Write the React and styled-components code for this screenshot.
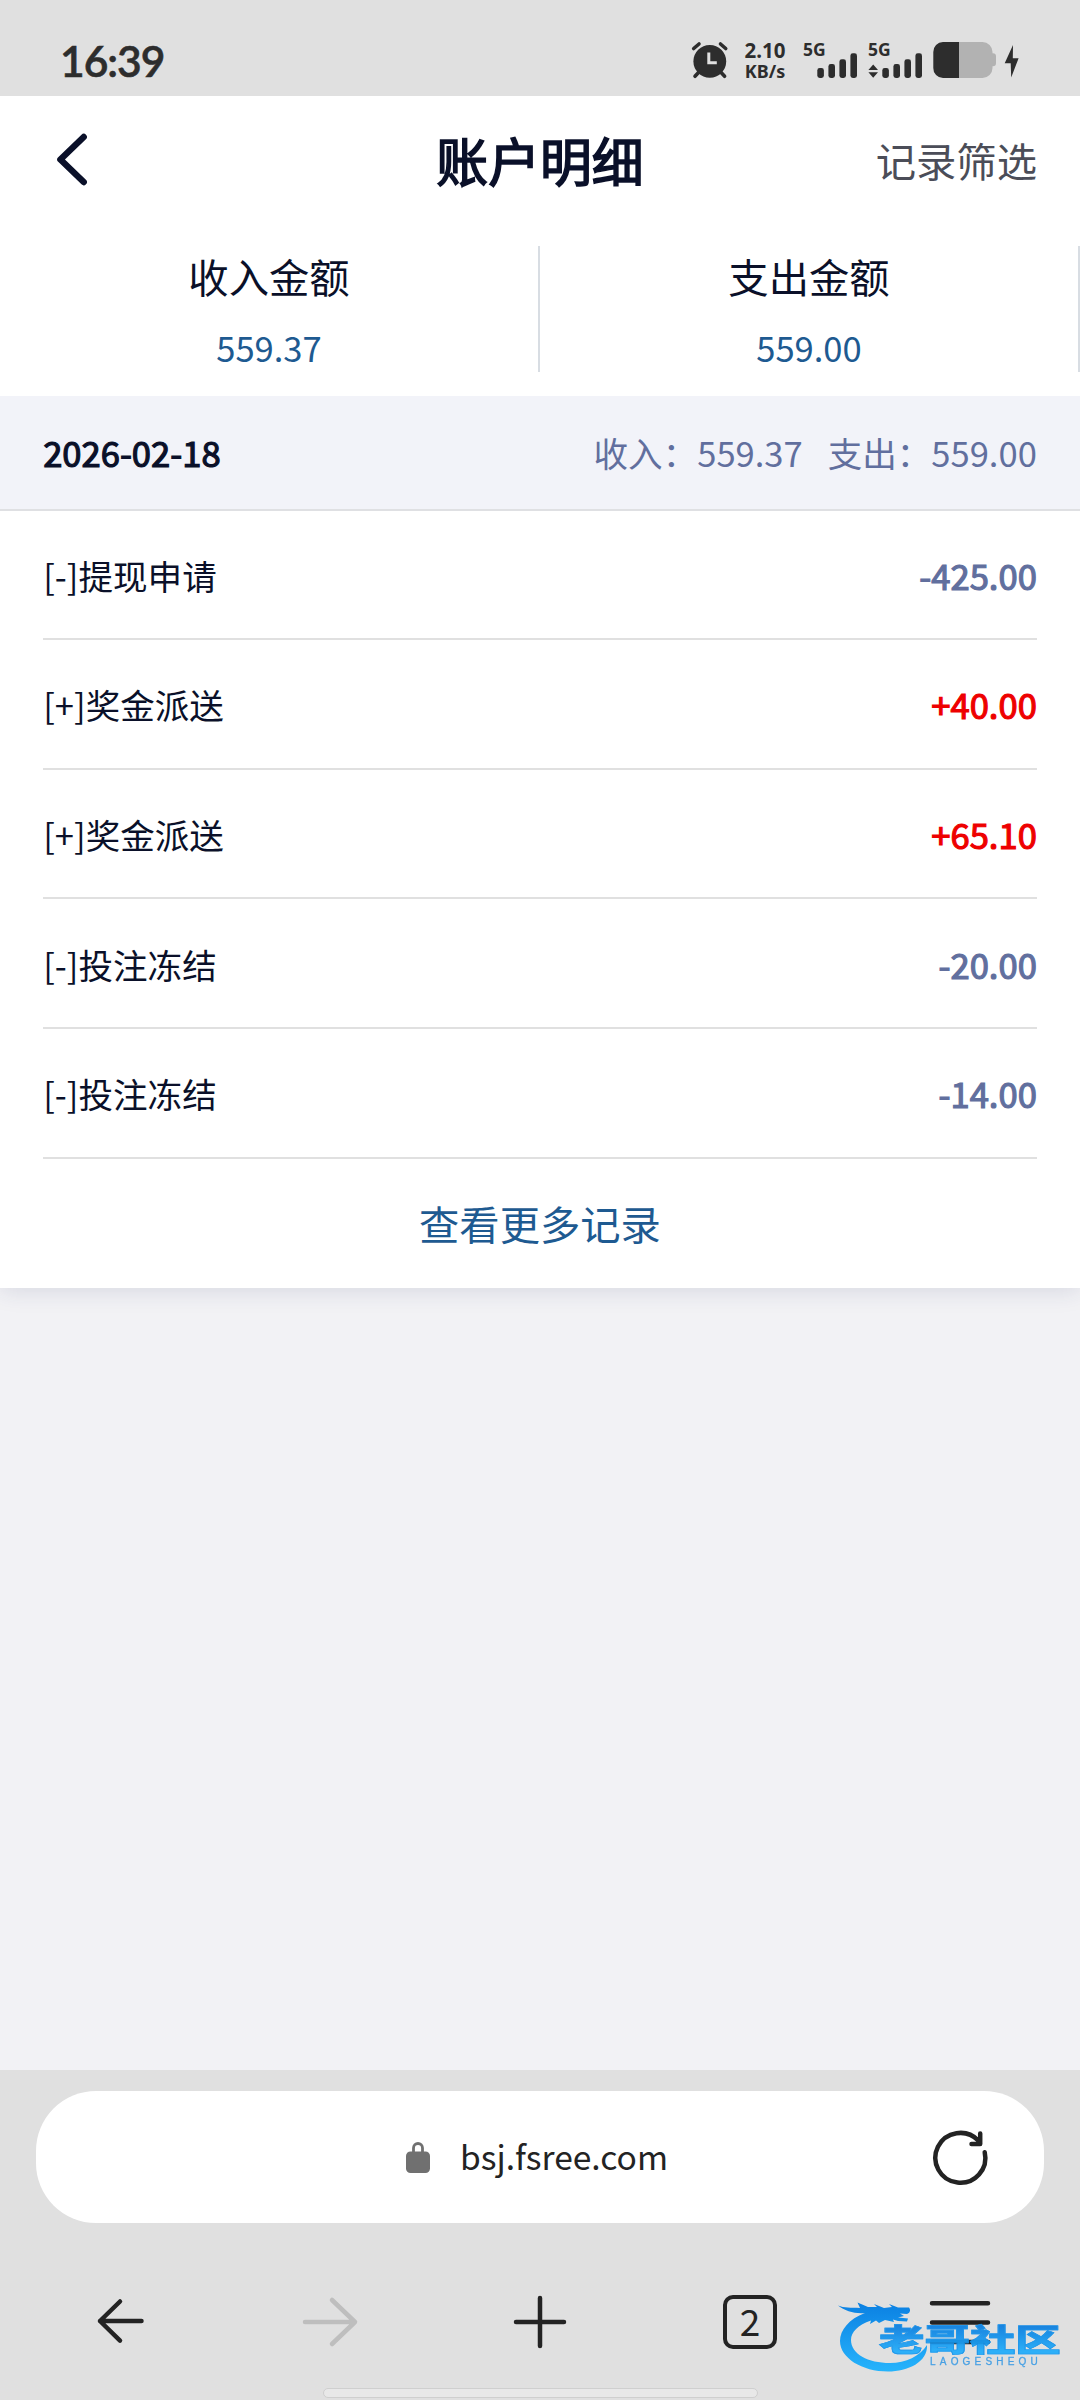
import React from "react";
import styled, { createGlobalStyle, css } from "styled-components";

const Global = createGlobalStyle`
  * { box-sizing: border-box; }
  body {
    margin: 0;
    background: #f2f2f5;
    font-family: "Noto Sans CJK SC", "Noto Sans", sans-serif;
  }
`;

const INK = "#0a1029";
const DARK = "#2d2d2d";
const NAV = "#232323";

const Screen = styled.div`
  position: relative;
  width: 1080px;
  height: 2400px;
  display: flex;
  flex-direction: column;
  overflow: hidden;
  background: #f2f2f5;
`;

/* ---------- status bar ---------- */
const StatusBar = styled.div`
  position: relative;
  z-index: 1;
  flex: none;
  height: 96px;
  background: #e0e0e0;
  display: flex;
  justify-content: space-between;
  padding: 0 57px 0 60px;
`;

const Clock = styled.div`
  font: 600 42.5px/70px Lato, sans-serif;
  letter-spacing: -1px;
  color: ${DARK};
  padding-top: 26px;
  -webkit-text-stroke: 0.6px ${DARK};
`;

const StatusIcons = styled.div`
  display: flex;
  align-items: flex-start;
  padding-top: 40px;
`;

const NetSpeed = styled.div`
  width: 60px;
  margin: 0 8px 0 6px;
  text-align: center;
  color: ${DARK};
  font-family: "Noto Sans", sans-serif;
  font-weight: 700;
`;

const SpeedValue = styled.div`
  font-size: 20.5px;
  line-height: 20px;
  height: 20px;
`;

const SpeedUnit = styled.div`
  font-size: 18px;
  line-height: 22px;
`;

const Signal = styled.div`
  width: 65px;
  height: 40px;
  color: ${DARK};
`;

const SignalTag = styled.div`
  font: 700 17.5px/18px "Noto Sans", sans-serif;
  height: 13px;
`;

const Icon = styled.svg`
  display: block;
  flex: none;
  overflow: visible;
`;

/* ---------- page ---------- */
const Card = styled.main`
  flex: none;
  background: #fff;
  box-shadow: 0 3px 22px rgba(40, 50, 100, 0.13);
`;

const Header = styled.header`
  height: 150px;
  display: grid;
  grid-template-columns: 1fr auto 1fr;
  padding: 0 43px;
`;

const BackButton = styled.div`
  padding: 35px 0 0 11px;
`;

const Title = styled.h1`
  margin: 0;
  font-size: 51.84px;
  font-weight: 400;
  line-height: 127px;
  color: ${INK};
  -webkit-text-stroke: 1.7px ${INK};
`;

const FilterLink = styled.div`
  text-align: right;
  font-size: 40.32px;
  line-height: 128px;
  color: #4b4d58;
`;

const Stats = styled.section`
  display: flex;
  height: 150px;
`;

const Stat = styled.div`
  flex: 1;
  height: 126px;
  border-right: 2px solid #d8dde3;
  text-align: center;
`;

const StatLabel = styled.div`
  font-size: 40.32px;
  line-height: 60px;
  color: ${INK};
`;

const StatValue = styled.div`
  margin-top: 9px;
  font-size: 34.56px;
  line-height: 64px;
  color: #1e5a91;
`;

const DayHeader = styled.div`
  height: 114.6px;
  padding: 0 43.2px;
  display: flex;
  align-items: center;
  justify-content: space-between;
  background: #f2f3f9;
  border-bottom: 2px solid #dfe0e3;
  font-size: 34.56px;
`;

const bold = css`
  -webkit-text-stroke: 1.2px currentColor;
`;

const DayDate = styled.div`
  color: ${INK};
  ${bold}
`;

const DayTotals = styled.div`
  display: flex;
  gap: 25px;
  color: #616f9e;
`;

const Records = styled.div`
  padding: 0 43.2px;
`;

const Record = styled.div`
  height: 129.6px;
  padding-top: 1px;
  display: flex;
  align-items: center;
  justify-content: space-between;
  border-bottom: 2px solid #e0e0e0;
  font-size: 34.56px;
  color: ${INK};
`;

const Amount = styled.span`
  color: ${(p) => (p.$income ? "#ee0000" : "#616f9e")};
  ${bold}
`;

const MoreLink = styled.div`
  height: 129.6px;
  text-align: center;
  font-size: 40.32px;
  line-height: 127px;
  color: #1e5a91;
`;

/* ---------- browser chrome ---------- */
const BrowserBar = styled.footer`
  flex: none;
  margin-top: auto;
  height: 330px;
  padding: 21px 36px 0;
  background: #e0e0e0;
`;

const AddressBar = styled.div`
  height: 132px;
  border-radius: 60px;
  background: #fff;
  display: grid;
  grid-template-columns: 1fr auto 1fr;
  align-items: center;
`;

const Address = styled.div`
  grid-column: 2;
  display: flex;
  align-items: center;
  gap: 30px;
  margin-left: -6px;
  color: ${NAV};
  font-size: 33.6px;
  line-height: 50px;
`;

const Host = styled.span`
  margin-top: -2px;
`;

const ReloadButton = styled.div`
  justify-self: end;
  padding-right: 54px;
`;

const NavRow = styled.nav`
  height: 132px;
  margin: 33px -21px 0;
  display: grid;
  grid-template-columns: repeat(5, 1fr);
  justify-items: center;
  align-items: center;
`;

const TabCount = styled.div`
  width: 54px;
  height: 54px;
  padding-bottom: 4px;
  border: 4.5px solid ${NAV};
  border-radius: 10px;
  display: flex;
  align-items: center;
  justify-content: center;
  font-size: 37px;
  line-height: 44px;
  color: ${NAV};
`;

const HomeIndicator = styled.div`
  width: 435px;
  height: 10px;
  margin: 0 auto;
  border: 1px solid #cfcfcf;
  border-radius: 5px;
  background: #e8e8e8;
`;

/* ---------- community mark ---------- */
const Mark = styled.div`
  position: absolute;
  left: 836px;
  top: 2296px;
  width: 228px;
  height: 78px;
`;

const MarkWords = styled.div`
  position: absolute;
  left: 43px;
  top: 25px;
  width: 182px;
  opacity: 0.94;
`;

const MarkName = styled.div`
  width: 124px;
  font-size: 30.5px;
  font-weight: 900;
  line-height: 34px;
  white-space: nowrap;
  transform: scaleX(1.49);
  transform-origin: 0 0;
  background: linear-gradient(#0d7fe0 15%, #22adfa 90%);
  -webkit-background-clip: text;
  background-clip: text;
  color: transparent;
  -webkit-text-stroke: 0.7px #1893ea;
`;

const MarkLatin = styled.div`
  margin: 1px 0 0 51px;
  font: 400 10px/11px "Liberation Sans", sans-serif;
  letter-spacing: 4.2px;
  white-space: nowrap;
  color: #3f9de4;
  -webkit-text-stroke: 0.3px #3f9de4;
`;

function SignalBars({ active }) {
  return (
    <Signal>
      <SignalTag>5G</SignalTag>
      <Icon width="60" height="26" viewBox="0 0 60 26" fill={DARK}>
        {active && <path d="M5.2 11.5 10 17H.4ZM.4 19.3H10l-4.8 5.5Z" />}
        <rect x="14.3" y="15" width="6.6" height="10" rx="2.4" />
        <rect x="25.4" y="11" width="6.6" height="14" rx="2.4" />
        <rect x="36.4" y="6.3" width="6.6" height="18.7" rx="2.4" />
        <rect x="47.4" y="0.3" width="6.6" height="24.7" rx="2.4" />
      </Icon>
    </Signal>
  );
}

function Battery() {
  return (
    <Icon width="64" height="38" viewBox="0 0 64 38">
      <path d="M10 2h39.500a10 10 0 0 1 10 10v1.300h.5a3 3 0 0 1 3 3v7a3 3 0 0 1-3 3h-.5V28a10 10 0 0 1-10 10H26V2Z" fill="#b2b2b2" />
      <path d="M10 2H26V38H10A9.700 9.700 0 0 1 .3 28V12A9.700 9.700 0 0 1 10 2Z" fill={DARK} />
    </Icon>
  );
}

function Alarm() {
  return (
    <Icon width="38" height="40" viewBox="0 0 38 40" fill="none" strokeLinecap="round">
      <circle cx="18.800" cy="21.300" r="16.400" fill={DARK} />
      <path d="M2.700 8.500 8 4M34.700 8.500 29.500 4M7.500 32.500l-3.500 3.800M30.100 32.500l3.500 3.800" stroke={DARK} strokeWidth="3.600" />
      <path d="M17.800 12.500v10.200h8" stroke="#e0e0e0" strokeWidth="3" strokeLinecap="butt" />
    </Icon>
  );
}

function Line({ d, color = NAV, size = 60 }) {
  return (
    <Icon width={size} height={size} viewBox="0 0 60 60" fill="none" stroke={color} strokeWidth="4.500" strokeLinecap="round" strokeLinejoin="round">
      <path d={d} />
    </Icon>
  );
}

const records = [
  ["[-]提现申请", "-425.00"],
  ["[+]奖金派送", "+40.00"],
  ["[+]奖金派送", "+65.10"],
  ["[-]投注冻结", "-20.00"],
  ["[-]投注冻结", "-14.00"],
];

export default function App() {
  return (
    <Screen>
      <Global />
      <StatusBar>
        <Clock>16:39</Clock>
        <StatusIcons>
          <Alarm />
          <NetSpeed>
            <SpeedValue>2.10</SpeedValue>
            <SpeedUnit>KB/s</SpeedUnit>
          </NetSpeed>
          <SignalBars />
          <SignalBars active />
          <Battery />
          <Icon width="26" height="40" viewBox="0 0 26 40">
            <path d="M16 5 7.700 23.300h6L14.200 37.500 21.600 18.300h-5.800Z" fill={DARK} />
          </Icon>
        </StatusIcons>
      </StatusBar>

      <Card>
        <Header>
          <BackButton>
            <Icon width="36" height="56" viewBox="0 0 36 56" fill="none" stroke={INK} strokeWidth="6.400" strokeLinecap="round" strokeLinejoin="round">
              <path d="M29.700 6 6.400 28.500 29.700 51" />
            </Icon>
          </BackButton>
          <Title>账户明细</Title>
          <FilterLink>记录筛选</FilterLink>
        </Header>
        <Stats>
          <Stat>
            <StatLabel>收入金额</StatLabel>
            <StatValue>559.37</StatValue>
          </Stat>
          <Stat>
            <StatLabel>支出金额</StatLabel>
            <StatValue>559.00</StatValue>
          </Stat>
        </Stats>
        <DayHeader>
          <DayDate>2026-02-18</DayDate>
          <DayTotals>
            <span>收入：559.37</span>
            <span>支出：559.00</span>
          </DayTotals>
        </DayHeader>
        <Records>
          {records.map(([name, amount], i) => (
            <Record key={i}>
              <span>{name}</span>
              <Amount $income={amount[0] === "+"}>{amount}</Amount>
            </Record>
          ))}
          <MoreLink>查看更多记录</MoreLink>
        </Records>
      </Card>

      <BrowserBar>
        <AddressBar>
          <Address>
            <Icon width="24" height="31" viewBox="0 0 24 31">
              <rect y="9.500" width="24" height="21.500" rx="4.500" fill="#707070" />
              <path d="M7.500 11V6a4.500 4.500 0 0 1 9 0v5" fill="none" stroke="#707070" strokeWidth="2.800" />
            </Icon>
            <Host>bsj.fsree.com</Host>
          </Address>
          <ReloadButton>
            <Line d="M54.700 25.200A25 24.900 0 1 1 48.300 13.500M50.200 6.500V17H41.500" />
          </ReloadButton>
        </AddressBar>
        <NavRow>
          <Line d="M51.500 29H10M30 9.500 10 29 30 48.700" />
          <Line color="#bebebe" d="M5 30H55M32 8 55 30 32 52" />
          <Line d="M30 6V54M6 30H54" />
          <TabCount>2</TabCount>
          <Line d="M2 11.300H58M2 30.600H58M2 50H58" />
        </NavRow>
        <HomeIndicator />
      </BrowserBar>

      <Mark>
        <Icon width="228" height="78" viewBox="0 0 228 78">
          <defs>
            <linearGradient id="wave" x1="0" y1="0" x2="0" y2="1">
              <stop offset="0" stopColor="#0b80e2" />
              <stop offset="1" stopColor="#26b4fc" />
            </linearGradient>
          </defs>
          <path
            fill="url(#wave)"
            d="M2 9.500C8 12 15 11.500 24 12L21.500 6.500 32 11 41 11 38 8 48 12 56 11 53 8 62 11.500 73 11.500C75 14 74 17 71 18L64 17.500 68 20 62 21.500 72 22.500 71 25.500 62 25 57 23.500 58 26 49 24 43 27 40 24.500 34 28 35 24.500C22 29 15 36 15 44C15 58 32 67 54 67C70 67 84 60 91 49C92 66 72 75.500 52 75.500C26 75.500 4 62 4 45C4 34 13 23 29 17C19 18 9 15 2 9.500Z"
          />
        </Icon>
        <MarkWords>
          <MarkName>老哥社区</MarkName>
          <MarkLatin>LAOGESHEQU</MarkLatin>
        </MarkWords>
      </Mark>
    </Screen>
  );
}
